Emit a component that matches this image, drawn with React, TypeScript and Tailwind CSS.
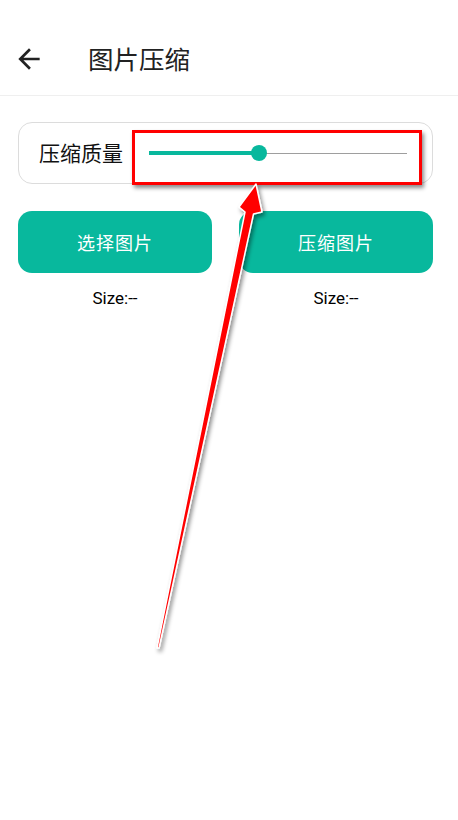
const font = { fontFamily: '"Noto Sans CJK SC", "Noto Sans", sans-serif' };

function BackIcon() {
  return (
    <svg viewBox="0 0 24 24" className="ml-[13px] h-[32px] w-[32px] text-[#222]" fill="currentColor" aria-hidden="true">
      <path d="M20 11H7.83l5.59-5.59L12 4l-8 8 8 8 1.41-1.41L7.83 13H20v-2z" />
    </svg>
  );
}

function QualitySlider() {
  return (
    <div className="relative h-[20px] flex-1">
      <div className="absolute left-0 right-0 top-[9.5px] h-px bg-[#9e9e9e]" />
      <div className="absolute left-0 top-[8px] h-[4px] w-[110px] bg-[#08b89d]" />
      <div className="absolute left-[102px] top-[2px] h-[16px] w-[16px] rounded-full bg-[#08b89d]" />
    </div>
  );
}

function Annotation() {
  return (
    <>
      <div className="pointer-events-none absolute left-[132px] top-[130px] h-[55px] w-[290px] border-[3px] border-[#ff0000] shadow-[2px_3px_4px_rgba(0,0,0,0.45)]" />
      <svg
        className="pointer-events-none absolute left-0 top-0 h-[820px] w-[458px]"
        viewBox="0 0 458 820"
        aria-hidden="true"
      >
        <defs>
          <filter id="shadow" x="-20%" y="-20%" width="140%" height="140%">
            <feDropShadow dx="2" dy="3" stdDeviation="2" floodColor="#000" floodOpacity="0.45" />
          </filter>
        </defs>
        <polygon
          points="256,184 262,212 253.5,214 159,648 157,648 245,212 239,207"
          fill="#ff0000"
          stroke="#ffffff"
          strokeWidth="1.5"
          strokeLinejoin="round"
          filter="url(#shadow)"
        />
      </svg>
    </>
  );
}

export default function App() {
  return (
    <div className="relative h-[820px] w-[458px] overflow-hidden bg-white" style={font}>
      <header className="flex h-[96px] items-center border-b border-[#efefef] pt-[22px]">
        <BackIcon />
        <h1 className="ml-[43px] text-[25.5px] font-normal text-[#222]">图片压缩</h1>
      </header>

      <main className="pl-[18px] pr-[25px] pt-[26px]">
        <div className="flex h-[62px] items-center rounded-[14px] border border-[#dcdcdc] pl-[20px] pr-[25px]">
          <span className="mr-[26px] text-[21px] text-[#111]">压缩质量</span>
          <QualitySlider />
        </div>

        <div className="mt-[27px] grid grid-cols-2 gap-[27px]">
          <div className="flex flex-col items-center">
            <button className="flex h-[62px] w-full items-center justify-center rounded-[14px] bg-[#08b89d] text-[18px] tracking-[1px] text-white">
              选择图片
            </button>
            <span className="mt-[13px] text-[17px] text-black" style={{ fontFamily: '"Roboto", sans-serif' }}>
              Size:--
            </span>
          </div>
          <div className="flex flex-col items-center">
            <button className="flex h-[62px] w-full items-center justify-center rounded-[14px] bg-[#08b89d] text-[18px] tracking-[1px] text-white">
              压缩图片
            </button>
            <span className="mt-[13px] text-[17px] text-black" style={{ fontFamily: '"Roboto", sans-serif' }}>
              Size:--
            </span>
          </div>
        </div>
      </main>

      <Annotation />
    </div>
  );
}
